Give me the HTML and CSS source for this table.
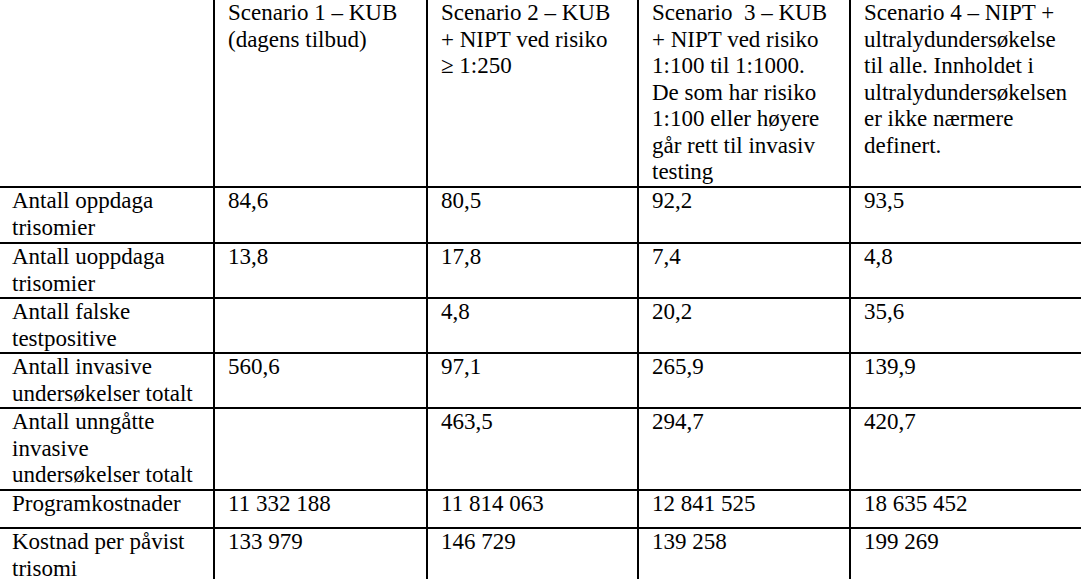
FILE: index.html
```html
<!DOCTYPE html>
<html>
<head>
<meta charset="utf-8">
<title>Scenarioer</title>
<link rel="stylesheet" href="styles.css">
</head>
<body>
<div class="sheet" role="table">
  <div class="cell head"></div>
  <div class="cell head">Scenario 1 – KUB<br>(dagens tilbud)</div>
  <div class="cell head">Scenario 2 – KUB<br>+ NIPT ved risiko<br>≥ 1:250</div>
  <div class="cell head">Scenario&nbsp; 3 – KUB<br>+ NIPT ved risiko<br>1:100 til 1:1000.<br>De som har risiko<br>1:100 eller høyere<br>går rett til invasiv<br>testing</div>
  <div class="cell head">Scenario 4 – NIPT +<br>ultralydundersøkelse<br>til alle. Innholdet i<br>ultralydundersøkelsen<br>er ikke nærmere<br>definert.</div>

  <div class="cell">Antall oppdaga<br>trisomier</div>
  <div class="cell">84,6</div>
  <div class="cell">80,5</div>
  <div class="cell">92,2</div>
  <div class="cell">93,5</div>

  <div class="cell">Antall uoppdaga<br>trisomier</div>
  <div class="cell">13,8</div>
  <div class="cell">17,8</div>
  <div class="cell">7,4</div>
  <div class="cell">4,8</div>

  <div class="cell">Antall falske<br>testpositive</div>
  <div class="cell"></div>
  <div class="cell">4,8</div>
  <div class="cell">20,2</div>
  <div class="cell">35,6</div>

  <div class="cell">Antall invasive<br>undersøkelser totalt</div>
  <div class="cell">560,6</div>
  <div class="cell">97,1</div>
  <div class="cell">265,9</div>
  <div class="cell">139,9</div>

  <div class="cell">Antall unngåtte<br>invasive<br>undersøkelser totalt</div>
  <div class="cell"></div>
  <div class="cell">463,5</div>
  <div class="cell">294,7</div>
  <div class="cell">420,7</div>

  <div class="cell">Programkostnader</div>
  <div class="cell">11 332 188</div>
  <div class="cell">11 814 063</div>
  <div class="cell">12 841 525</div>
  <div class="cell">18 635 452</div>

  <div class="cell">Kostnad per påvist<br>trisomi</div>
  <div class="cell">133 979</div>
  <div class="cell">146 729</div>
  <div class="cell">139 258</div>
  <div class="cell">199 269</div>
</div>
</body>
</html>
```
FILE: styles.css
```css
html, body {
  margin: 0;
  padding: 0;
  background: #ffffff;
  overflow: hidden;
}

.sheet {
  display: grid;
  grid-template-columns: 214px 211px 209px 210px 232px;
  grid-template-rows: 186px 54px 53px 53px 53px 80px 36px 53px;
  gap: 2px;
  padding: 2px;
  background: #000000;
  width: max-content;
  margin: -2px 0 0 -3px;
  font-family: "Liberation Serif", serif;
  font-size: 23px;
  line-height: 26.5px;
  color: #000000;
}

.cell {
  background: #ffffff;
  padding: 0 4px 0 13px;
  white-space: nowrap;
}
```
